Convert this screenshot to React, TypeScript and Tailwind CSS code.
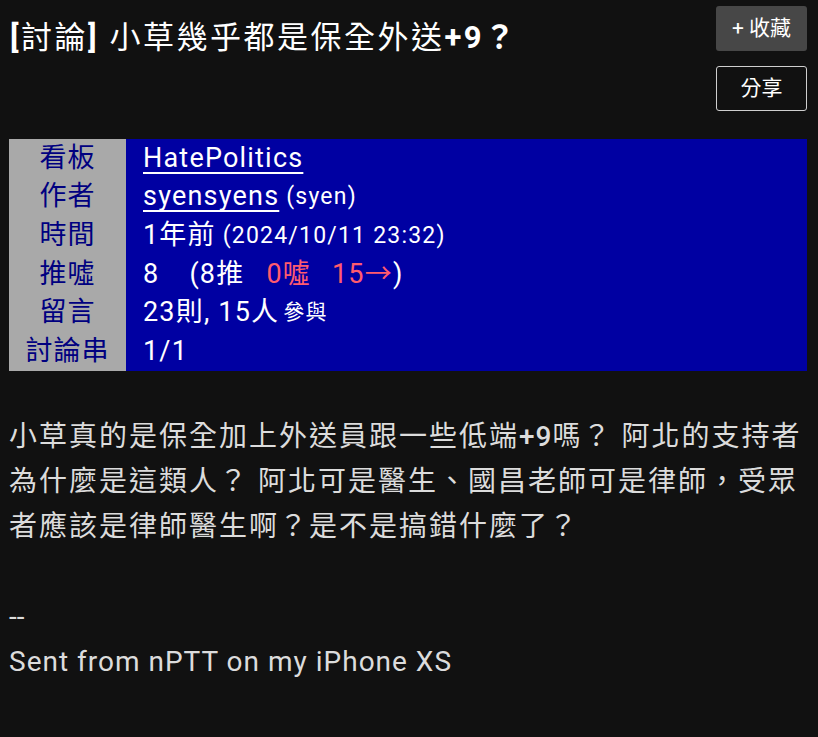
import React from "react";

const FONT = "font-['Roboto','Noto_Sans_CJK_TC',sans-serif]";

const META: { label: string; value: React.ReactNode }[] = [
  {
    label: "看板",
    value: <a className="underline underline-offset-[5px] decoration-2">HatePolitics</a>,
  },
  {
    label: "作者",
    value: (
      <>
        <a className="underline underline-offset-[5px] decoration-2">syensyens</a>
        <span className="text-[23px] ml-[7px]">(syen)</span>
      </>
    ),
  },
  {
    label: "時間",
    value: (
      <>
        1年前<span className="text-[23px] ml-[7px]">(2024/10/11 23:32)</span>
      </>
    ),
  },
  {
    label: "推噓",
    value: (
      <>
        <span>8</span>
        <span className="ml-[30px]">(8推</span>
        <span className="ml-[22px] text-[#ff5b6e]">0噓</span>
        <span className="ml-[21px] text-[#ff5b6e]">15→</span>
        <span>)</span>
      </>
    ),
  },
  {
    label: "留言",
    value: (
      <>
        23則, 15人<span className="text-[21px] ml-[4px]">參與</span>
      </>
    ),
  },
  { label: "討論串", value: "1/1" },
];

export default function App() {
  return (
    <div className={`min-h-[737px] bg-[#111111] text-white ${FONT} px-[9px]`}>
      <div className="flex justify-between pt-[6px]">
        <h1 className="text-[31px] tracking-[2.5px] leading-[40px] mt-[12px] ml-[1px]">
          <span className="font-bold">[</span>
          <span className="font-normal">討論</span>
          <span className="font-bold">]</span>{" "}
          <span className="font-normal">小草幾乎都是保全外送</span>
          <span className="font-bold">+9？</span>
        </h1>
        <div className="flex flex-col gap-[15px] mr-[2px]">
          <button className="w-[91px] h-[45px] rounded-[3px] bg-[#474747] text-[21px] text-white">
            + 收藏
          </button>
          <button className="w-[91px] h-[45px] rounded-[3px] border border-[#cfcfcf] text-[21px] text-white">
            分享
          </button>
        </div>
      </div>

      <div className="mt-[28px] grid grid-cols-[117px_1fr] w-[798px]">
        {META.map((row) => (
          <React.Fragment key={row.label}>
            <div className="h-[38.67px] flex items-center justify-center bg-[#a9a9a9] text-[#000080] text-[27px] tracking-[1px] leading-none">
              {row.label}
            </div>
            <div className="h-[38.67px] flex items-center whitespace-pre bg-[#0000a2] text-white text-[27px] tracking-[1.2px] leading-none pl-[17px]">
              {row.value}
            </div>
          </React.Fragment>
        ))}
      </div>

      <div className="mt-[43px] text-[#dcdcdc] text-[28px] leading-[45px] pr-[6px]">
        <p className="tracking-[2px]">
          小草真的是保全加上外送員跟一些低端<span className="font-medium tracking-[1px]">+9</span>嗎？ 阿北的支持者為什麼是這類人？ 阿北可是醫生、國昌老師可是律師，受眾者應該是律師醫生啊？是不是搞錯什麼了？
        </p>
        <p>&nbsp;</p>
        <p>--</p>
        <p className="tracking-[1px]">Sent from nPTT on my iPhone XS</p>
      </div>
    </div>
  );
}
